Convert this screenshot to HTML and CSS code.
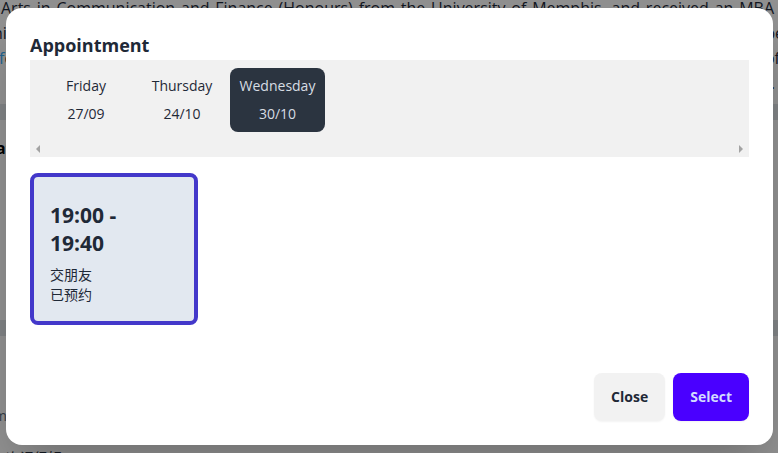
FILE: index.html
```html
<!DOCTYPE html>
<html lang="en">
<head>
<meta charset="utf-8">
<meta name="viewport" content="width=device-width, initial-scale=1">
<title>Appointment</title>
<link rel="stylesheet" href="styles.css">
</head>
<body>
<main class="page">
  <section class="bio">
    <p class="bio-line bio-full">Arts in Communication and Finance (Honours) from the University of Memphis, and received an MBA</p>
    <p class="bio-line"><span>ni</span><span>be</span></p>
    <p class="bio-line bio-outer"><span><a class="bio-link" href="#">f</a>o</span><span>of</span></p>
    <p class="bio-line bio-end"><span>.</span></p>
  </section>
  <section class="block rates"><h2 class="block-title">at</h2></section>
  <section class="block reviews">
    <p class="meta">m</p>
    <p class="review">上次课很好</p>
  </section>
</main>
<div class="overlay">
  <div class="modal" role="dialog" aria-labelledby="modal-title">
    <h3 class="modal-title" id="modal-title">Appointment</h3>
    <div class="dates">
      <div class="date-list">
        <button class="date" type="button"><span>Friday</span><span>27/09</span></button>
        <button class="date" type="button"><span>Thursday</span><span>24/10</span></button>
        <button class="date date-active" type="button"><span>Wednesday</span><span>30/10</span></button>
      </div>
      <div class="scroll-track">
        <svg class="arrow" viewBox="0 0 4 8" aria-hidden="true"><path d="M4 0v8L0 4z"/></svg>
        <svg class="arrow" viewBox="0 0 4 8" aria-hidden="true"><path d="M0 0v8l4-4z"/></svg>
      </div>
    </div>
    <div class="slots">
      <button class="slot" type="button">
        <span class="slot-time">19:00 - 19:40</span>
        <span>交朋友</span>
        <span>已预约</span>
      </button>
    </div>
    <div class="actions">
      <button class="btn" type="button">Close</button>
      <button class="btn btn-primary" type="button">Select</button>
    </div>
  </div>
</div>
</body>
</html>
```
FILE: styles.css
```css
* {
  box-sizing: border-box;
}

body {
  margin: 0;
  background: #d6dbde;
  color: #1f2937;
  font-family: "Segoe UI", "Open Sans", "Noto Sans CJK SC", sans-serif;
  font-size: 14px;
  line-height: 20px;
}

button {
  margin: 0;
  border: 0;
  font: inherit;
  color: inherit;
  cursor: pointer;
}

h2,
h3,
p {
  margin: 0;
}

.page {
  display: flex;
  flex-direction: column;
  gap: 16px;
  height: 100vh;
  overflow: hidden;
}

.bio {
  flex: none;
  height: 104px;
  background: #f2f2f2;
  font-size: 16px;
  line-height: 25px;
  overflow: hidden;
}

.bio-line {
  display: flex;
  justify-content: space-between;
  margin: 0 -6px 0 -7px;
  white-space: nowrap;
}

.bio-full {
  display: block;
  margin: -4px 4px 0 1px;
  text-align-last: justify;
  white-space: normal;
}

.bio-outer {
  margin: 0 -2px 0 -1px;
}

.bio-end {
  justify-content: flex-end;
  margin-right: 3px;
}

.bio-link {
  color: #38a5ee;
  text-decoration: none;
}

.block {
  background: #f2f2f2;
}

.rates {
  flex: none;
  height: 200px;
  padding-top: 16px;
}

.block-title {
  margin-left: -4px;
  font-size: 16px;
  line-height: 24px;
  color: #000;
}

.reviews {
  flex: 1;
  min-height: 0;
  padding-top: 70px;
}

.meta {
  margin-left: -6px;
  color: #5b6675;
}

.review {
  margin: 22px 0 0 -8px;
}

.overlay {
  position: absolute;
  inset: 0;
  display: grid;
  align-items: start;
  padding: 8px 5px 8px 6px;
  background: rgba(0, 0, 0, 0.4);
}

.modal {
  padding: 24px;
  border-radius: 16px;
  background: #fff;
  box-shadow: 0 25px 50px -12px rgba(0, 0, 0, 0.25);
}

.modal-title {
  padding-bottom: 2px;
  font-size: 18px;
  line-height: 26px;
  font-weight: 700;
}

.dates {
  padding: 8px 8px 4px;
  background: #f1f1f1;
}

.date-list {
  display: flex;
}

.date {
  display: flex;
  flex-direction: column;
  align-items: center;
  width: 96px;
  height: 64px;
  padding: 4px 0;
  border-radius: 8px;
  background: transparent;
  line-height: 28px;
}

.date-active {
  width: 95px;
  background: #2b3440;
  color: #d7dde4;
}

.scroll-track {
  display: flex;
  justify-content: space-between;
  align-items: flex-end;
  height: 21px;
  margin: 0 -2px;
}

.arrow {
  width: 4px;
  height: 8px;
  fill: #a3a3a3;
}

.slots {
  display: flex;
  min-height: 184px;
  padding-top: 16px;
}

.slot {
  display: flex;
  flex-direction: column;
  align-items: flex-start;
  align-self: flex-start;
  width: 168px;
  height: 152px;
  padding: 24px 16px;
  border: 4px solid #4338ca;
  border-radius: 8px;
  background: #e2e8f0;
  text-align: left;
}

.slot-time {
  width: 80px;
  margin-bottom: 8px;
  font-size: 21px;
  line-height: 28px;
  font-weight: 700;
}

.actions {
  display: flex;
  justify-content: flex-end;
  gap: 8px;
  margin-top: 32px;
}

.btn {
  height: 48px;
  padding: 0 17px;
  border-radius: 8px;
  background: #f2f2f2;
  box-shadow: 0 1px 2px rgba(0, 0, 0, 0.05);
  font-weight: 700;
}

.btn-primary {
  background: #4a00ff;
  color: #d3dbff;
}
```
